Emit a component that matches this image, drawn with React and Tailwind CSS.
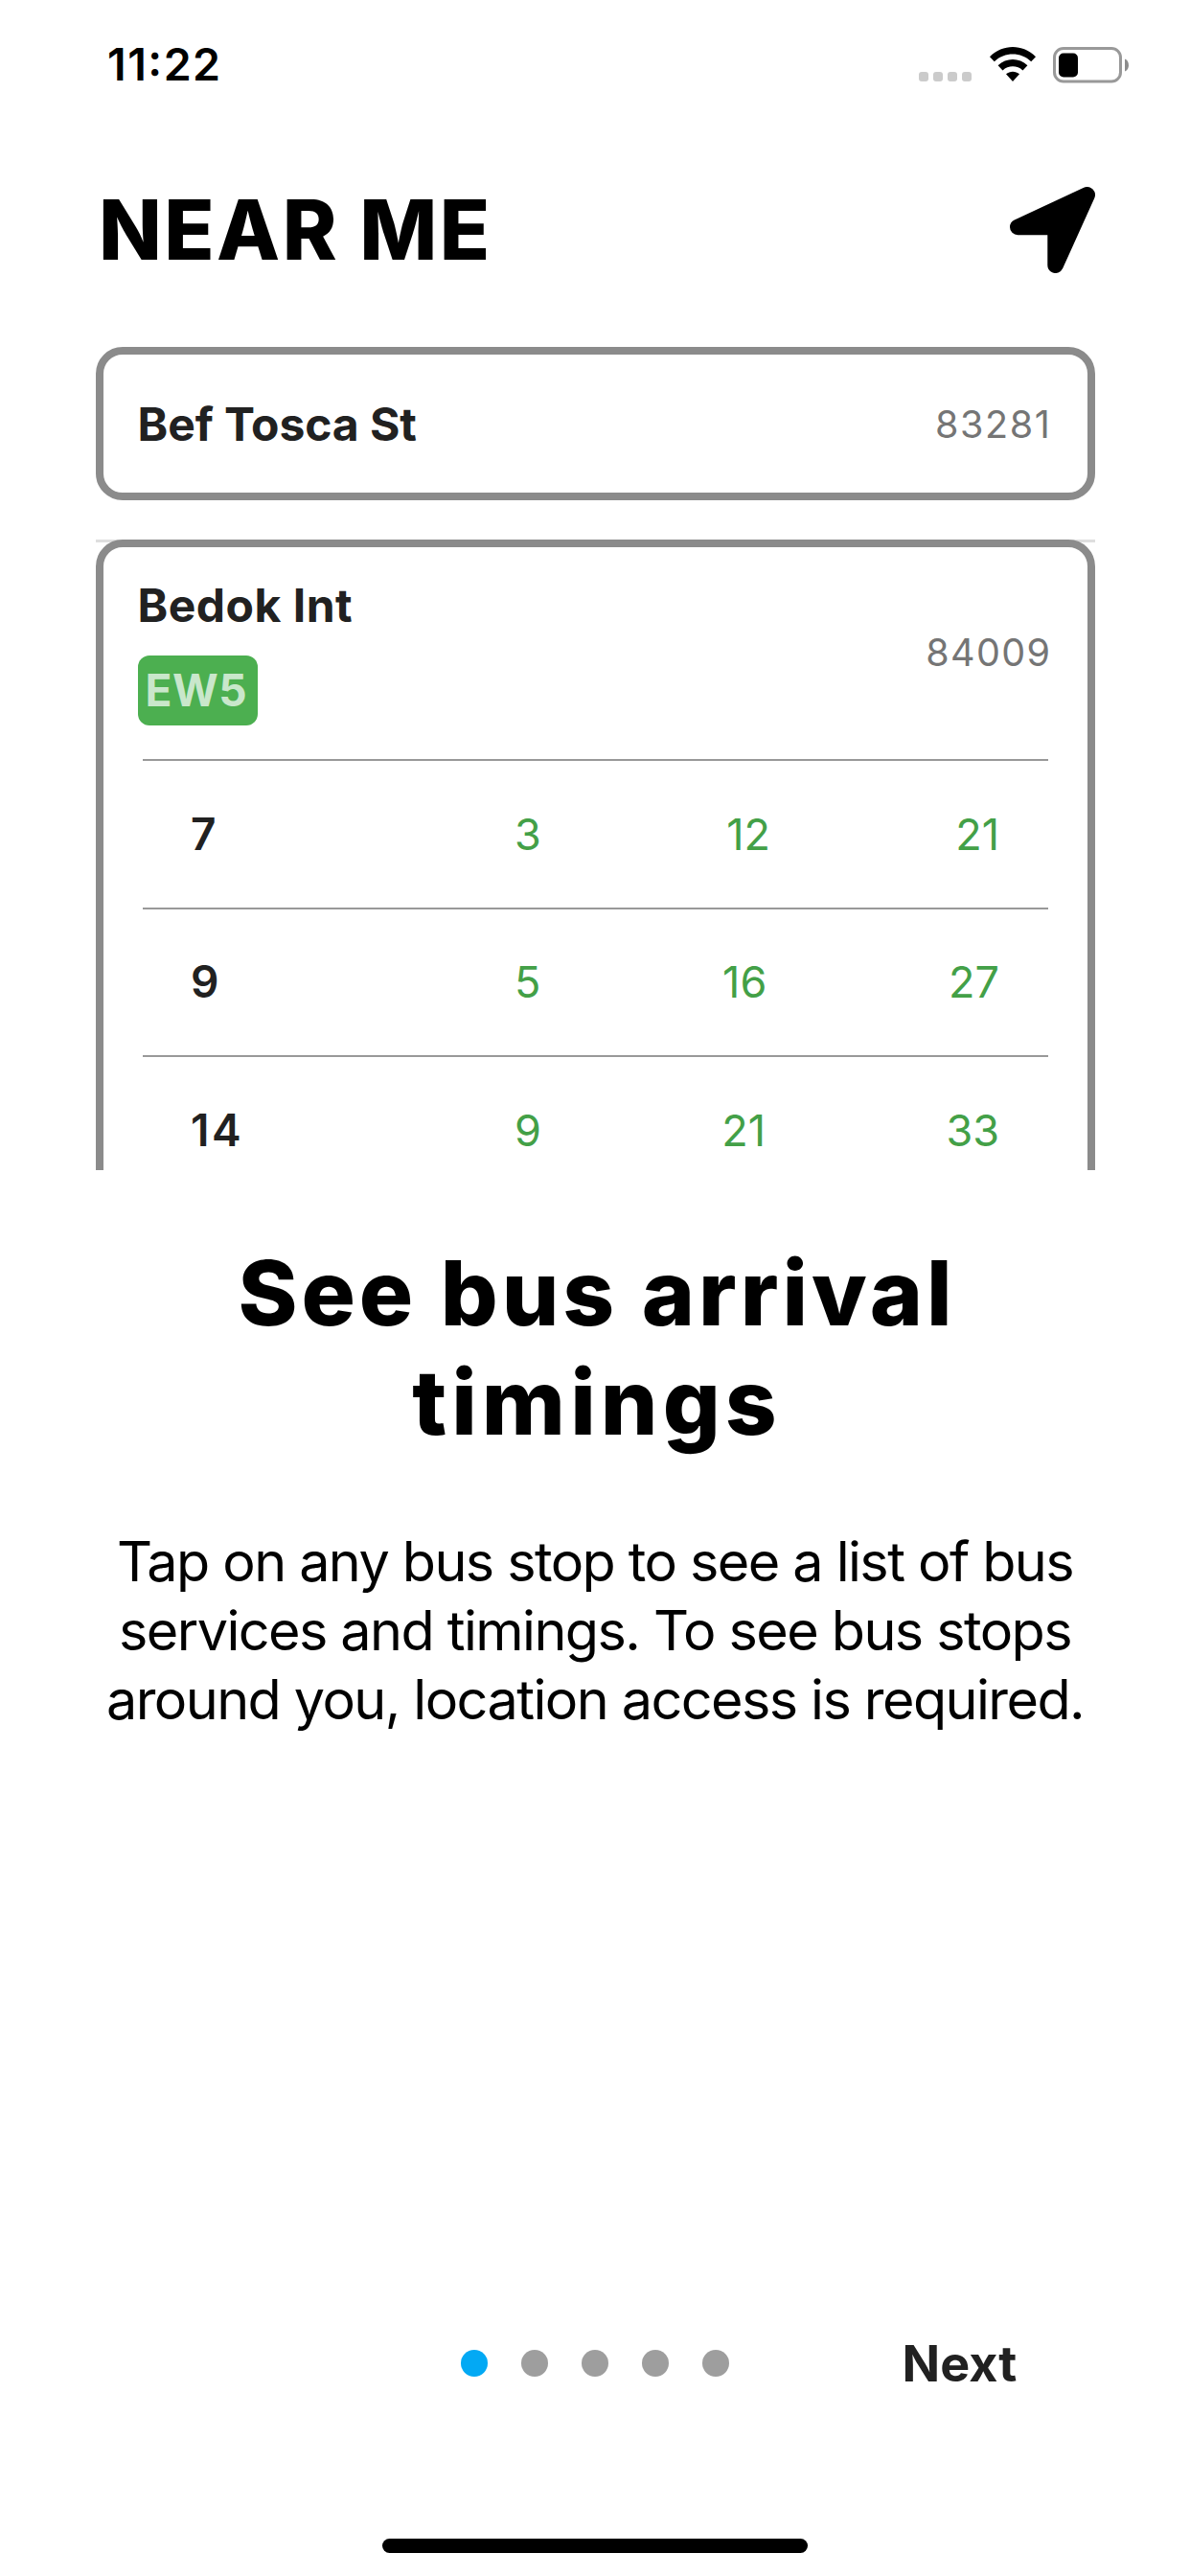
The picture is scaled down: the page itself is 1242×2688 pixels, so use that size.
const services = [
  { no: '7', times: ['3', '12', '21'] },
  { no: '9', times: ['5', '16', '27'] },
  { no: '14', times: ['9', '21', '33'] },
];

function WifiIcon() {
  return (
    <svg className="ml-[19px] mt-[-2px] h-9 w-12" viewBox="0 0 48 36">
      <path d="M0 10.200 C13.500 -3.400 34.500 -3.400 48 10.200 L43.200 15.300 C32.400 5 15.600 5 4.800 15.300 Z" />
      <path d="M8.600 19.300 C17.400 10.900 30.600 10.900 39.400 19.300 L34.500 24.400 C28.600 19 19.400 19 13.500 24.400 Z" />
      <path d="M17 28.200 C21 24.800 27 24.800 31 28.200 L24 36 Z" />
    </svg>
  );
}

function BatteryIcon() {
  return (
    <svg className="ml-[18px] h-[38px] w-20" viewBox="0 0 80 38">
      <rect x="1.500" y="1.500" width="69" height="34.500" rx="9.500" fill="none" stroke="#999" strokeWidth="3" />
      <rect x="6" y="6.500" width="20" height="25" rx="5" />
      <path d="M75 12.500 C80.300 14.500 80.300 23.500 75 25.500 Z" fill="#8c8c8c" />
    </svg>
  );
}

function StatusBar() {
  return (
    <div className="flex h-[136px] items-center justify-between pl-28 pr-[63px]">
      <span className="text-[46.5px] font-semibold tracking-[1.5px] [font-feature-settings:'case']">11:22</span>
      <div className="flex items-center">
        <div className="mt-6 flex gap-[5px]">
          {[0, 1, 2, 3].map((i) => (
            <span key={i} className="size-2.5 rounded-[3px] bg-[#cbcbcb]" />
          ))}
        </div>
        <WifiIcon />
        <BatteryIcon />
      </div>
    </div>
  );
}

function LocationArrow() {
  return (
    <svg className="h-[90px] w-[90px]" viewBox="0 0 90 90">
      <path
        d="M8.300 42 L80.700 8.300 L47.600 81.700 L47.600 42 Z"
        stroke="#000"
        strokeWidth="16.600"
        strokeLinejoin="round"
      />
    </svg>
  );
}

export default function App() {
  return (
    <div className="flex h-[2688px] w-[1242px] flex-col bg-white font-['Inter','Liberation_Sans',sans-serif] text-black">
      <StatusBar />

      <header className="flex h-[226px] items-center justify-between pb-[19px] pl-[103px] pr-[98px]">
        <h1 className="text-[86px] font-extrabold leading-none tracking-[2.4px]">NEAR ME</h1>
        <LocationArrow />
      </header>

      <main className="h-[859px] overflow-hidden pl-[100px] pr-[99px] text-[#212121]">
        <section className="flex h-40 items-center justify-between rounded-[28px] border-8 border-[#8b8b8b] pl-[35.5px] pr-[37.5px] pt-0.5">
          <h2 className="text-5xl font-bold leading-none tracking-[-0.1px]">Bef Tosca St</h2>
          <span className="pt-0.5 text-[39.5px] leading-none tracking-[1.6px] text-[#757575]">83281</span>
        </section>

        <div className="mt-[41px] bg-[linear-gradient(#dedede_3px,transparent_3px)]">
          <section className="h-[900px] rounded-[28px] border-8 border-[#8b8b8b] bg-white">
            <div className="flex h-[221px] items-center justify-between pl-[35.5px] pr-[37.5px]">
              <div>
                <h2 className="text-5xl font-bold leading-[51px] tracking-[0.5px]">Bedok Int</h2>
                <div className="mt-[27px] h-[73px] w-[125px] rounded-xl bg-[#4caf50] pl-2 text-[46px] font-bold leading-[73px] tracking-[0.6px] text-[#c9e7cb]">
                  EW5
                </div>
              </div>
              <span className="text-[39.5px] leading-none tracking-[1.4px] text-[#757575]">84009</span>
            </div>

            <ul className="mx-[41px]">
              {services.map((s) => (
                <li key={s.no} className="flex h-[154.5px] items-center border-t-2 border-[#999] pl-[50px] pr-[51px]">
                  <span className="w-[338px] text-[46px] font-semibold tracking-[2.5px]">{s.no}</span>
                  <div className="flex flex-1 justify-between text-[45px] text-[#43a047]">
                    {s.times.map((t, i) => (
                      <span key={i}>{t}</span>
                    ))}
                  </div>
                </li>
              ))}
            </ul>
          </section>
        </div>
      </main>

      <h2 className="mt-[71px] pl-1 text-center text-[94px] font-extrabold leading-[114px]">
        <span className="block tracking-[3.95px]">See bus arrival</span>
        <span className="block tracking-[5.1px]">timings</span>
      </h2>

      <p className="mt-[73px] text-center text-[57.5px] leading-[72px] tracking-[-1.57px]">
        Tap on any bus stop to see a list of bus
        <br />
        services and timings. To see bus stops
        <br />
        around you, location access is required.
      </p>

      <footer className="mt-auto flex flex-col items-center">
        <div className="grid h-[88px] w-full grid-cols-[1fr_auto_1fr] items-center">
          <div className="col-start-2 flex gap-[35px]">
            <span className="size-7 rounded-full bg-[#03a9f4]" />
            {[1, 2, 3, 4].map((i) => (
              <span key={i} className="size-7 rounded-full bg-[#9e9e9e]" />
            ))}
          </div>
          <button className="pl-[180.5px] pt-0.5 text-left text-[52px] font-bold tracking-[0.1px] text-[#212121]">Next</button>
        </div>
        <div className="mb-6 mt-[139px] h-[15px] w-[444px] rounded-full bg-black" />
      </footer>
    </div>
  );
}
